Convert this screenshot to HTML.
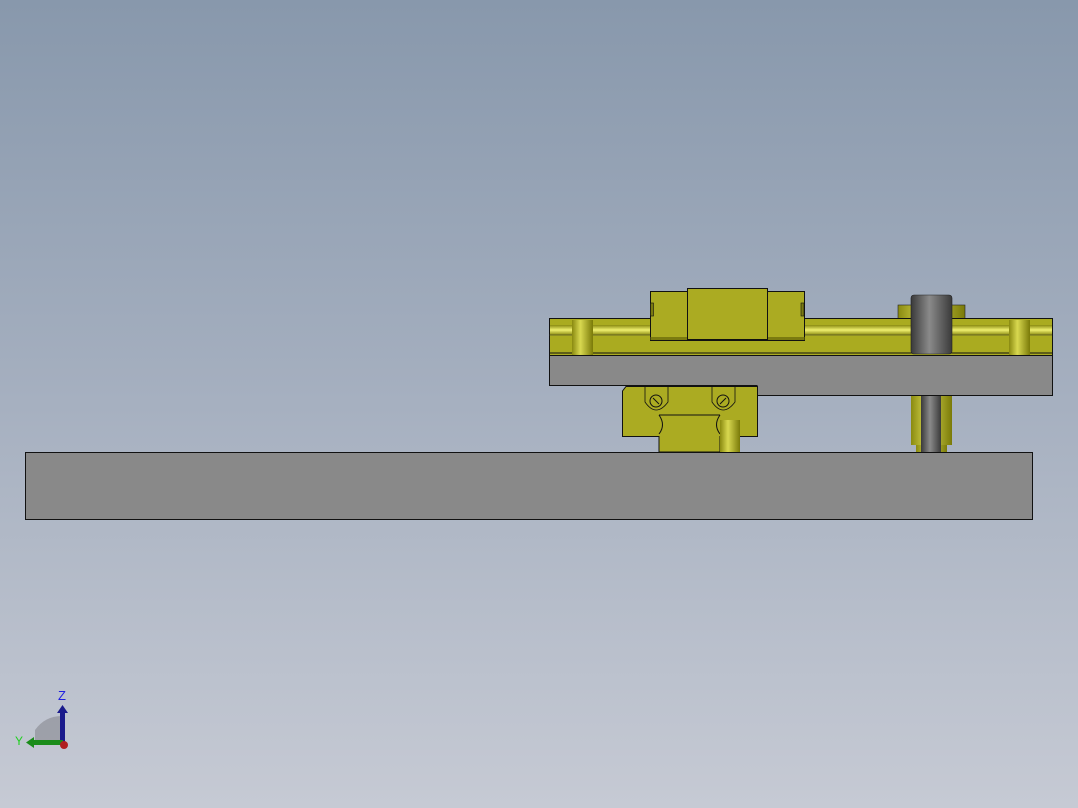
<!DOCTYPE html>
<html><head><meta charset="utf-8"><style>
html,body{margin:0;padding:0;width:1078px;height:808px;overflow:hidden}
body{background:linear-gradient(to bottom,#8898ac 0%,#a6b0c0 50%,#c6cad4 100%)}
</style></head><body>
<svg width="1078" height="808" viewBox="0 0 1078 808" xmlns="http://www.w3.org/2000/svg" style="position:absolute;left:0;top:0">
<defs>
<linearGradient id="cy" x1="0" x2="1" y1="0" y2="0">
<stop offset="0" stop-color="#8a8a10"/><stop offset="0.4" stop-color="#d8d850"/><stop offset="1" stop-color="#7a7a08"/></linearGradient>
<linearGradient id="gy" x1="0" x2="1" y1="0" y2="0">
<stop offset="0" stop-color="#3a3a3a"/><stop offset="0.45" stop-color="#8a8a8a"/><stop offset="1" stop-color="#3a3a3a"/></linearGradient>
<linearGradient id="rs" x1="0" x2="0" y1="0" y2="1">
<stop offset="0" stop-color="#8a8a10"/><stop offset="0.5" stop-color="#f0f070"/><stop offset="1" stop-color="#8a8a10"/></linearGradient>
</defs>
<rect x="898" y="305" width="67" height="14" fill="url(#cy)" stroke="#222" stroke-width="0.6"/>
<rect x="549.5" y="318.5" width="503" height="37" fill="#aaab20" stroke="#111"/>
<rect x="550" y="325" width="502" height="10" fill="url(#rs)"/>
<line x1="549" y1="335" x2="1052" y2="335" stroke="#333" stroke-width="0.6"/>
<line x1="549" y1="353" x2="1052" y2="353" stroke="#111"/>
<rect x="572" y="320" width="21" height="35" fill="url(#cy)"/>
<rect x="1009" y="320" width="21" height="35" fill="url(#cy)"/>
<rect x="650.5" y="291.5" width="154" height="49" fill="#abab22" stroke="#111"/>
<rect x="650.5" y="337" width="154" height="3" fill="#7a7a10"/>
<rect x="687.5" y="288.5" width="80" height="51" fill="#abab22" stroke="#111"/>
<rect x="650.5" y="303" width="3" height="13" fill="#7a7a10" stroke="#111" stroke-width="0.6"/>
<rect x="801" y="303" width="3" height="13" fill="#7a7a10" stroke="#111" stroke-width="0.6"/>
<rect x="911" y="295" width="41" height="59" rx="3" fill="url(#gy)" stroke="#222" stroke-width="0.6"/>
<polygon points="549.5,355.5 1052.5,355.5 1052.5,395.5 757,395.5 757,385.5 549.5,385.5" fill="#898989" stroke="#111"/>
<rect x="911" y="396" width="41" height="49" fill="url(#cy)"/>
<rect x="916" y="445" width="31" height="7" fill="url(#cy)"/>
<rect x="921" y="396" width="20" height="56" fill="url(#gy)"/>
<path d="M622.5,391 L626,386.5 L757.5,386.5 L757.5,436.5 L720,436.5 L720,452 L659,452 L659,436.5 L622.5,436.5 Z" fill="#abab22" stroke="#111"/>
<path d="M659,415 L720,415" stroke="#111"/>
<path d="M659,415 Q666,425 659,434" fill="none" stroke="#111"/>
<path d="M720,415 Q713,425 720,434" fill="none" stroke="#111"/>
<path d="M645,387 L645,402 Q656,418 668,402 L668,387" fill="none" stroke="#111" stroke-width="0.8"/>
<path d="M712,387 L712,402 Q723,418 735,402 L735,387" fill="none" stroke="#111" stroke-width="0.8"/>
<circle cx="656" cy="401" r="6" fill="none" stroke="#111"/>
<circle cx="723" cy="401" r="6" fill="none" stroke="#111"/>
<line x1="653" y1="398" x2="659" y2="404" stroke="#111"/>
<line x1="720" y1="404" x2="726" y2="398" stroke="#111"/>
<rect x="720" y="420" width="20" height="32" fill="url(#cy)"/>
<rect x="25.5" y="452.5" width="1007" height="67" fill="#898989" stroke="#111"/>
<path d="M35,745 L35,730 Q45,716 62,716 L62,745 Z" fill="#8e9098" opacity="0.7"/>
<rect x="60" y="712" width="5" height="31" fill="#1a1a8c"/>
<polygon points="57,713 62.5,705 68,713" fill="#1a1a8c"/>
<rect x="33" y="740" width="30" height="5" fill="#1a8c1a"/>
<polygon points="34,737 26,742.5 34,748" fill="#1a8c1a"/>
<circle cx="64" cy="745" r="4" fill="#b02020"/>
<text x="58" y="700" font-family="Liberation Sans,sans-serif" font-size="13" fill="#2020e0">Z</text>
<text x="15" y="745" font-family="Liberation Sans,sans-serif" font-size="12" fill="#20d020">Y</text>
</svg>
</body></html>
